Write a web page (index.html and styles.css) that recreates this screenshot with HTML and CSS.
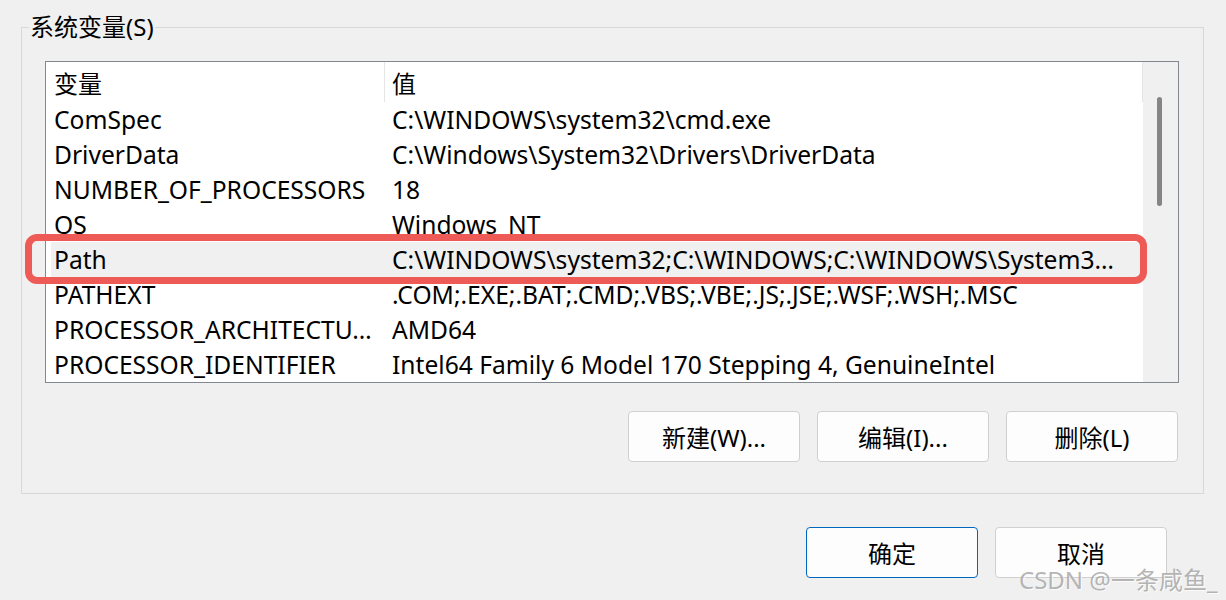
FILE: index.html
```html
<!DOCTYPE html>
<html lang="zh-CN">
<head>
<meta charset="utf-8">
<title>系统变量</title>
<link rel="stylesheet" href="styles.css">
</head>
<body>
<div class="dialog">
  <fieldset class="group">
    <legend class="group-title">系统变量(S)</legend>
    <div class="listbox">
      <div class="list">
        <div class="row head">
          <div class="c1">变量</div>
          <div class="c2">值</div>
        </div>
        <div class="row"><div class="c1">ComSpec</div><div class="c2">C:\WINDOWS\system32\cmd.exe</div></div>
        <div class="row"><div class="c1">DriverData</div><div class="c2">C:\Windows\System32\Drivers\DriverData</div></div>
        <div class="row"><div class="c1">NUMBER_OF_PROCESSORS</div><div class="c2">18</div></div>
        <div class="row"><div class="c1">OS</div><div class="c2">Windows_NT</div></div>
        <div class="row selected"><div class="c1">Path</div><div class="c2">C:\WINDOWS\system32;C:\WINDOWS;C:\WINDOWS\System3…</div><span class="mark"></span></div>
        <div class="row"><div class="c1">PATHEXT</div><div class="c2">.COM;.EXE;.BAT;.CMD;.VBS;.VBE;.JS;.JSE;.WSF;.WSH;.MSC</div></div>
        <div class="row"><div class="c1">PROCESSOR_ARCHITECTU…</div><div class="c2">AMD64</div></div>
        <div class="row"><div class="c1">PROCESSOR_IDENTIFIER</div><div class="c2">Intel64 Family 6 Model 170 Stepping 4, GenuineIntel</div></div>
      </div>
      <div class="scrollbar"><div class="thumb"></div></div>
    </div>
    <div class="actions">
      <button class="btn">新建(W)...</button>
      <button class="btn">编辑(I)...</button>
      <button class="btn">删除(L)</button>
    </div>
  </fieldset>
  <div class="footer">
    <button class="btn primary">确定</button>
    <button class="btn">取消</button>
  </div>
  <div class="watermark">CSDN @一条咸鱼_</div>
</div>
</body>
</html>
```

FILE: styles.css
```css
html, body {
  margin: 0;
  padding: 0;
  background: #f0f0f0;
}
body {
  width: 1226px;
  height: 600px;
  overflow: hidden;
  font-family: "Noto Sans", "Noto Sans CJK SC", sans-serif;
  color: #000;
}
.dialog {
  position: relative;
  width: 1226px;
  height: 600px;
  padding-top: 11px;
  box-sizing: border-box;
}
.group {
  margin: 0 22px 0 21px;
  padding: 0 24px 31px 23px;
  border: 1px solid #d8d8d8;
  min-width: 0;
}
.group-title {
  font-size: 24px;
  line-height: 32px;
  padding: 0 1px;
  margin-left: -16px;
}
.listbox {
  margin-top: 18px;
  display: flex;
  height: 320px;
  border: 1px solid #828790;
  background: #fff;
}
.list {
  flex: 1;
  min-width: 0;
}
.row {
  position: relative;
  display: flex;
  height: 35px;
  align-items: center;
  font-size: 24.6px;
  white-space: nowrap;
}
.row.head {
  height: 40px;
  font-size: 24px;
}
.c1 {
  width: 339px;
  flex: none;
  padding-left: 8px;
  overflow: hidden;
  box-sizing: border-box;
}
.c2 {
  flex: 1;
  min-width: 0;
  padding-left: 7px;
  overflow: hidden;
}
.head .c1, .head .c2 {
  align-self: stretch;
  display: flex;
  align-items: center;
}
.head .c1 {
  border-right: 1px solid #e5e5e5;
}
.head .c2 {
  border-right: 1px solid #e5e5e5;
}
.row.selected {
  background: #f0f0f0;
  margin-left: 5px;
}
.row.selected .c1 {
  width: 334px;
  padding-left: 3px;
}
.mark {
  position: absolute;
  left: -26px;
  right: -4px;
  top: -8px;
  bottom: -7px;
  border: 7px solid #ee5b56;
  border-radius: 12px;
  pointer-events: none;
}
.scrollbar {
  width: 35px;
  flex: none;
  background: #f0f0f0;
}
.thumb {
  width: 5px;
  height: 109px;
  margin: 35px 0 0 14px;
  border-radius: 3px;
  background: #858585;
}
.actions {
  display: flex;
  justify-content: flex-end;
  gap: 17px;
  margin-top: 28px;
  margin-right: 1px;
}
.btn {
  width: 172px;
  height: 51px;
  border: 1px solid #d0d0d0;
  border-radius: 4px;
  background: #fdfdfd;
  font-family: "Noto Sans", "Noto Sans CJK SC", sans-serif;
  font-size: 24px;
  color: #000;
  padding: 0;
}
.btn.primary {
  border-color: #0067c0;
}
.footer {
  display: flex;
  justify-content: flex-end;
  gap: 17px;
  margin-top: 33px;
  margin-right: 59px;
}
.watermark {
  position: absolute;
  left: 1019px;
  top: 564px;
  font-size: 24px;
  line-height: 32px;
  color: rgba(150, 150, 150, 0.7);
  text-shadow: 1px 1px 0 rgba(255, 255, 255, 0.8);
  white-space: nowrap;
}
```
